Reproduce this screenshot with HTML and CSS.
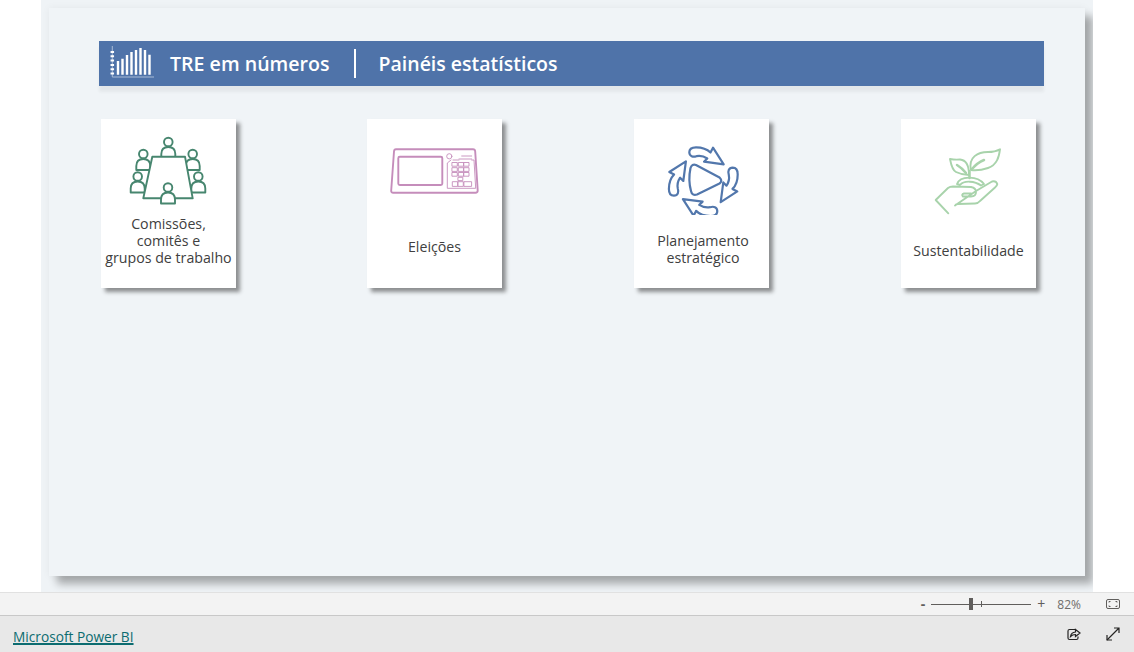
FILE: index.html
```html
<!DOCTYPE html>
<html lang="pt-BR">
<head>
    <meta charset="UTF-8">
    <meta name="viewport" content="width=device-width, initial-scale=1.0">
    <title>TRE em números</title>
    <link rel="stylesheet" href="styles.css">
</head>
<body>
    <!-- Report canvas -->
    <main class="report">
        <section class="page">
            <header class="banner">
                <svg class="banner-logo" width="46" height="34" viewBox="0 0 46 34">
                    <path class="logo-axis" d="M3.300 0V31H45"/>
                    <path class="logo-dots" d="M3.300 5V29"/>
                    <path class="logo-bars" d="M9 28.700V15M13.500 28.700V12.700M18 28.700V9M22.500 28.700V6M27 28.700V4M31.500 28.700V2M36 28.700V4M40.500 28.700V8.700"/>
                </svg>
                <h1 class="banner-title title-main">TRE em números</h1>
                <span class="banner-divider"></span>
                <h2 class="banner-title title-sub">Painéis estatísticos</h2>
            </header>

            <div class="cards">
                <!-- Comissões -->
                <a class="card">
                    <svg class="card-icon icon-green icon-nudge" width="136" height="96" viewBox="0 0 136 96">
                        <defs>
                            <g id="person">
                                <circle cx="0" cy="0" r="4.300"/>
                                <path d="M-7 16V12Q-7 5 0 5Q7 5 7 12V16Z"/>
                            </g>
                        </defs>
                        <use href="#person" x="68.300" y="23"/>
                        <use href="#person" x="43.300" y="35"/>
                        <use href="#person" x="92.700" y="35"/>
                        <use href="#person" x="37.700" y="57.500"/>
                        <use href="#person" x="98.300" y="57.500"/>
                        <path d="M52.300 37.700H85L92.700 79.300H43.300Z"/>
                        <use href="#person" x="68" y="68.500"/>
                    </svg>
                    <span class="card-label label-one">Comissões,<br>comitês e<br>grupos de trabalho</span>
                </a>

                <!-- Eleicoes -->
                <a class="card card-second">
                    <svg class="card-icon icon-pink" width="136" height="96" viewBox="0 0 136 96">
                        <path d="M29 30.300H106Q108 30.300 108.200 32.500L110.700 71.500Q110.700 73.700 108.500 73.700H26.200Q24 73.700 24.200 71.500L27 32.500Q27.200 30.300 29 30.300Z"/>
                        <rect x="31.300" y="37.700" width="44" height="28.300" rx="1.500"/>
                        <g class="thin">
                            <circle cx="82.300" cy="37.300" r="2.600"/>
                            <path d="M86 41H92M92 40H104.700M94.700 37H104.700M104.700 41H107L108.700 69.300H80.300L80.300 44L84 41"/>
                            <rect x="85.300" y="43.500" width="5" height="3.700"/>
                            <rect x="91.700" y="43.500" width="5" height="3.700"/>
                            <rect x="97" y="43.500" width="5" height="3.700"/>
                            <rect x="85.300" y="48.700" width="5" height="3.700"/>
                            <rect x="91.700" y="48.700" width="5" height="3.700"/>
                            <rect x="97" y="48.700" width="5" height="3.700"/>
                            <rect x="85.300" y="53.500" width="5" height="3.700"/>
                            <rect x="91.700" y="53.500" width="5" height="3.700"/>
                            <rect x="97" y="53.500" width="5" height="3.700"/>
                            <rect x="91.300" y="58.300" width="4.500" height="3.300"/>
                            <rect x="85.700" y="62.700" width="5" height="4.700"/>
                            <rect x="91.300" y="62.700" width="5" height="4.700"/>
                            <rect x="97.300" y="62.700" width="7.300" height="4.700"/>
                        </g>
                    </svg>
                    <span class="card-label label-two">Eleições</span>
                </a>

                <!-- Planejamento -->
                <a class="card">
                    <svg class="card-icon icon-blue" width="136" height="96" viewBox="0 0 136 96">
                        <defs>
                            <path id="turn-arrow" d="M66 28.300C72 28.300 77 30 80.500 33.500L83 28.700L93.700 45.300L74 42.700L77.300 39.500C73.500 37 70 36.500 66.500 37.200C63 38.300 59.500 37.500 59.300 33.300C59.300 30 62 28.300 66 28.300Z"/>
                        </defs>
                        <g transform="translate(-4 0)">
                            <path d="M66 46L89.500 58.500Q93 62 89.500 64.500L67 75.500Q62 77 61 72Q58 61 60.500 49Q62 44.500 66 46Z"/>
                            <use href="#turn-arrow"/>
                            <use href="#turn-arrow" transform="rotate(90 73.300 62.700)"/>
                            <use href="#turn-arrow" transform="rotate(180 73.300 62.700)"/>
                            <use href="#turn-arrow" transform="rotate(270 73.300 62.700)"/>
                        </g>
                    </svg>
                    <span class="card-label label-three">Planejamento<br>estratégico</span>
                </a>

                <!-- Sustentabilidade -->
                <a class="card">
                    <svg class="card-icon icon-sprout icon-nudge" width="136" height="96" viewBox="0 0 136 96">
                        <path d="M71 51C68 38 78 33 88 33Q95 33 100 30.300C99 38 97 46 88 49Q79 52 71 51Z"/>
                        <path d="M50 40C51 45 52 51 56 53Q62 56 69 56C69 46 66 41 60 40.500Q55 41 50 40Z"/>
                        <path class="vein" d="M72 50Q77 44 84 41M57 46Q62 49 66 54M69.500 52V59"/>
                        <path d="M57 65C60 57 77 56 84 65L81 66.500C75 62 64 61 60 66Z"/>
                        <path d="M48.300 94.300L35.700 81L48 69Q50 67.500 53 67.500L71 68Q76 69 76 73Q76 77.500 71 77.500L63 77.500Q61 75.500 64 74.500H71M76 72L92 62.500Q96 61.500 97.300 65Q97 67 95 68.500L80 82Q78 84.500 75 84.500L58 85Q56 85 55 86.500Z"/>
                    </svg>
                    <span class="card-label label-four">Sustentabilidade</span>
                </a>
            </div>
        </section>
    </main>

    <!-- Zoom bar -->
    <div class="statusbar">
        <span class="zoom-sign zoom-minus">-</span>
        <div class="zoom-track">
            <span class="zoom-thumb"></span>
            <span class="zoom-tick"></span>
        </div>
        <span class="zoom-sign zoom-plus">+</span>
        <span class="zoom-value">82%</span>
        <svg class="fit-icon" width="14" height="10" viewBox="0 0 14 10">
            <rect x="0.500" y="0.500" width="13" height="9" rx="1.500"/>
            <path d="M3 3.500V2.500H4.500M9.500 2.500H11V3.500M11 6.500V7.500H9.500M4.500 7.500H3V6.500"/>
        </svg>
    </div>

    <!-- Footer -->
    <footer class="footer">
        <a class="powerbi-link" href="#">Microsoft Power BI</a>
        <div class="footer-icons">
            <svg width="14" height="14" viewBox="0 0 14 14">
                <path class="share-box" d="M8 2.500H2.500Q1 2.500 1 4V11Q1 12.500 2.500 12.500H9.500Q11 12.500 11 11V9.500"/>
                <path d="M3.500 9.500Q4 5.500 8.500 5V2.500L13 6L8.500 9.500V7.500Q5.500 7.500 3.500 9.500Z"/>
            </svg>
            <svg width="14" height="14" viewBox="0 0 14 14">
                <path d="M1 13L13 1M8 1H13V6"/>
                <path class="expand-tail" d="M1 8V13H6"/>
            </svg>
        </div>
    </footer>
</body>
</html>
```

FILE: styles.css
```css
html, body {
    margin: 0;
    padding: 0;
}
body {
    width: 1134px;
    height: 652px;
    overflow: hidden;
    display: flex;
    flex-direction: column;
    background-color: white;
    font-family: "Open Sans", "Noto Sans", Arial, sans-serif;
}
.report {
    width: 1052px;
    height: 592px;
    margin-left: 41px;
    padding: 8px;
    box-sizing: border-box;
    overflow: hidden;
    background-color: #eff3f6;
}
.page {
    width: 1036px;
    height: 568px;
    padding: 33px 41px 0 50px;
    box-sizing: border-box;
    background-color: #f0f4f7;
    box-shadow: 8px 8px 8px rgba(0, 0, 0, 0.3), 0 0 8px rgba(0, 0, 0, 0.05);
}
.banner {
    height: 45px;
    display: flex;
    align-items: center;
    background-color: #4f73a9;
    box-shadow: 0 6px 3px rgba(0, 0, 0, 0.05);
}
.banner-logo {
    margin: -1px 15px 0 10px;
}
.logo-axis {
    fill: none;
    stroke: #a9bcd6;
    stroke-width: 1;
}
.logo-dots {
    fill: none;
    stroke: white;
    stroke-width: 3.500;
    stroke-dasharray: 2 2.300;
}
.logo-bars {
    fill: none;
    stroke: white;
    stroke-width: 2.400;
}
.banner-title {
    margin: 0;
    color: white;
    font-weight: 600;
    white-space: nowrap;
}
.title-main {
    font-size: 19.600px;
}
.title-sub {
    font-size: 19.500px;
}
.banner-divider {
    width: 2px;
    height: 29px;
    margin: 0 23px 0 24px;
    background-color: white;
}
.cards {
    display: flex;
    gap: 132px;
    margin: 33px 0 0 2px;
}
.card {
    width: 135px;
    height: 169px;
    display: flex;
    flex-direction: column;
    align-items: center;
    background-color: white;
    box-shadow: 4px 4px 4px rgba(0, 0, 0, 0.42);
}
.card-second {
    margin-left: -1px;
}
.card-icon {
    flex-shrink: 0;
    align-self: flex-start;
    fill: none;
    stroke-width: 1.900;
    stroke-linejoin: round;
    stroke-linecap: round;
}
.icon-nudge {
    margin-left: -1px;
}
.card-label {
    color: #404040;
    font-size: 14.200px;
    line-height: 17px;
    text-align: center;
    white-space: nowrap;
}
.label-one {
    margin-top: 0;
}
.label-two {
    margin-top: 23px;
}
.label-three {
    margin: 17px 0 0 3px;
}
.label-four {
    margin-top: 27px;
}
.icon-green {
    stroke: #47866f;
}
.icon-green use,
.icon-green path {
    fill: white;
}
.icon-pink {
    stroke: #c58dbb;
}
.icon-pink .thin {
    stroke-width: 0.900;
}
.icon-blue {
    stroke: #5277ac;
    stroke-width: 2.200;
}
.icon-sprout {
    stroke: #a8d3ab;
}
.icon-sprout .vein {
    stroke-width: 2.500;
}
.statusbar {
    height: 22px;
    display: flex;
    align-items: center;
    padding-right: 14px;
    justify-content: flex-end;
    background-color: #f3f3f3;
    border-top: 1px solid #e1e1e1;
    border-bottom: 1px solid #c8c8c8;
    color: #605e5c;
}
.zoom-sign {
    font-size: 14px;
    line-height: 14px;
}
.zoom-minus {
    font-weight: 700;
}
.zoom-track {
    position: relative;
    width: 100px;
    height: 1px;
    margin: 0 6px;
    background-color: #605e5c;
}
.zoom-thumb {
    position: absolute;
    left: 38px;
    top: -6px;
    width: 4px;
    height: 12px;
    background-color: #605e5c;
}
.zoom-tick {
    position: absolute;
    left: 50px;
    top: -3px;
    width: 1px;
    height: 6px;
    background-color: #605e5c;
}
.zoom-value {
    margin-left: 12px;
    font-size: 12px;
    color: #6f6d6b;
}
.fit-icon {
    margin-left: 25px;
    fill: none;
    stroke: #605e5c;
    stroke-width: 1;
}
.footer {
    flex: 1;
    display: flex;
    align-items: center;
    justify-content: space-between;
    padding: 0 14px 0 13px;
    background-color: #e8e8e8;
}
.powerbi-link {
    position: relative;
    top: 2px;
    color: #0c6c70;
    font-size: 13.700px;
    text-decoration: underline;
    text-decoration-thickness: 1.500px;
}
.footer-icons {
    display: flex;
    gap: 25px;
}
.footer-icons svg {
    fill: none;
    stroke: #252423;
    stroke-width: 1.200;
}
```
